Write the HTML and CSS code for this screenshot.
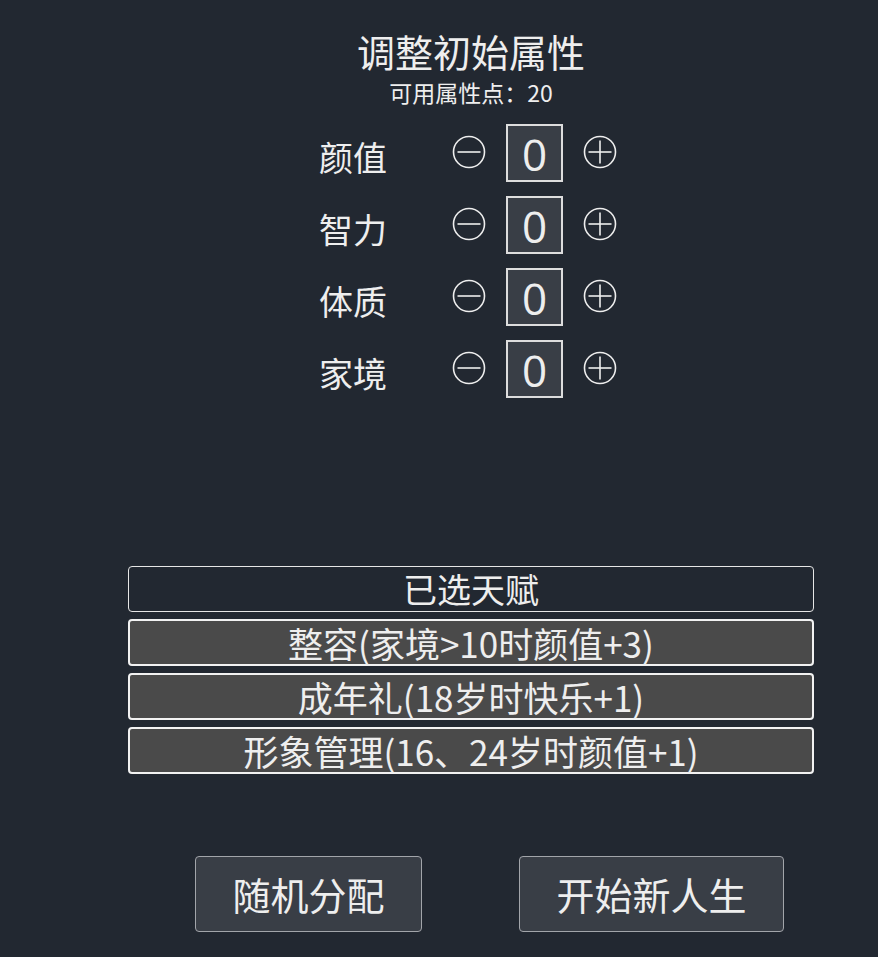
FILE: index.html
```html
<!DOCTYPE html>
<html lang="zh-CN">
<head>
<meta charset="utf-8">
<title>调整初始属性</title>
<link rel="stylesheet" href="styles.css">
</head>
<body>
<main class="page">
  <h1 class="title">调整初始属性</h1>
  <div class="points">可用属性点：20</div>

  <section class="attrs">
    <div class="attr-row">
      <span class="attr-label">颜值</span>
      <button class="circle-btn" aria-label="减少"><svg viewBox="0 0 34 34" width="34" height="34"><circle cx="17" cy="17" r="15.5"/><line x1="5.5" y1="17" x2="28.5" y2="17"/></svg></button>
      <span class="attr-value">0</span>
      <button class="circle-btn" aria-label="增加"><svg viewBox="0 0 34 34" width="34" height="34"><circle cx="17" cy="17" r="15.5"/><line x1="5.5" y1="17" x2="28.5" y2="17"/><line x1="17" y1="5.5" x2="17" y2="28.5"/></svg></button>
    </div>
    <div class="attr-row">
      <span class="attr-label">智力</span>
      <button class="circle-btn" aria-label="减少"><svg viewBox="0 0 34 34" width="34" height="34"><circle cx="17" cy="17" r="15.5"/><line x1="5.5" y1="17" x2="28.5" y2="17"/></svg></button>
      <span class="attr-value">0</span>
      <button class="circle-btn" aria-label="增加"><svg viewBox="0 0 34 34" width="34" height="34"><circle cx="17" cy="17" r="15.5"/><line x1="5.5" y1="17" x2="28.5" y2="17"/><line x1="17" y1="5.5" x2="17" y2="28.5"/></svg></button>
    </div>
    <div class="attr-row">
      <span class="attr-label">体质</span>
      <button class="circle-btn" aria-label="减少"><svg viewBox="0 0 34 34" width="34" height="34"><circle cx="17" cy="17" r="15.5"/><line x1="5.5" y1="17" x2="28.5" y2="17"/></svg></button>
      <span class="attr-value">0</span>
      <button class="circle-btn" aria-label="增加"><svg viewBox="0 0 34 34" width="34" height="34"><circle cx="17" cy="17" r="15.5"/><line x1="5.5" y1="17" x2="28.5" y2="17"/><line x1="17" y1="5.5" x2="17" y2="28.5"/></svg></button>
    </div>
    <div class="attr-row">
      <span class="attr-label">家境</span>
      <button class="circle-btn" aria-label="减少"><svg viewBox="0 0 34 34" width="34" height="34"><circle cx="17" cy="17" r="15.5"/><line x1="5.5" y1="17" x2="28.5" y2="17"/></svg></button>
      <span class="attr-value">0</span>
      <button class="circle-btn" aria-label="增加"><svg viewBox="0 0 34 34" width="34" height="34"><circle cx="17" cy="17" r="15.5"/><line x1="5.5" y1="17" x2="28.5" y2="17"/><line x1="17" y1="5.5" x2="17" y2="28.5"/></svg></button>
    </div>
  </section>

  <section class="talents">
    <div class="talent-head">已选天赋</div>
    <div class="talent">整容(家境&gt;10时颜值+3)</div>
    <div class="talent">成年礼(18岁时快乐+1)</div>
    <div class="talent">形象管理(16、24岁时颜值+1)</div>
  </section>

  <div class="actions">
    <button class="action-btn btn-random">随机分配</button>
    <button class="action-btn btn-start">开始新人生</button>
  </div>
</main>
</body>
</html>
```

FILE: styles.css
```css
html, body {
  margin: 0;
  padding: 0;
  background: #222831;
  height: 100%;
}

body {
  font-family: "Noto Sans CJK SC", "Noto Sans", sans-serif;
  color: #eeeeee;
}

.page {
  width: 686px;
  margin-left: 128px;
  padding-top: 29px;
  display: flex;
  flex-direction: column;
  align-items: center;
}

.title {
  margin: 0;
  font-size: 38px;
  line-height: 44px;
  font-weight: normal;
  color: #eeeeee;
}

.points {
  margin-top: 6px;
  font-size: 23px;
  line-height: 26px;
}

.attrs {
  margin-top: 19px;
  display: flex;
  flex-direction: column;
  gap: 14px;
}

.attr-row {
  display: flex;
  align-items: center;
  height: 58px;
  margin-left: -6px;
}

.attr-label {
  width: 68px;
  font-size: 34px;
  line-height: 40px;
  margin-top: 8px;
  margin-right: 65px;
  white-space: nowrap;
}

.circle-btn {
  width: 34px;
  height: 34px;
  padding: 0;
  border: none;
  background: transparent;
  display: flex;
  margin-top: -2px;
}

.circle-btn svg {
  fill: none;
  stroke: #eeeeee;
  stroke-width: 1.6;
}

.attr-value {
  box-sizing: border-box;
  width: 57px;
  height: 58px;
  margin: 0 20px;
  border: 2px solid #dddddd;
  background: #393e46;
  font-family: "Open Sans", "Noto Sans", sans-serif;
  font-size: 44px;
  line-height: 56px;
  text-align: center;
  color: #eeeeee;
}

.talents {
  align-self: stretch;
  margin-top: 168px;
  display: flex;
  flex-direction: column;
  gap: 7px;
}

.talent-head {
  box-sizing: border-box;
  height: 46px;
  border: 1px solid #e6e6e6;
  border-radius: 4px;
  font-size: 34px;
  line-height: 44px;
  text-align: center;
}

.talent {
  box-sizing: border-box;
  height: 47px;
  border: 2px solid #f2f2f2;
  border-radius: 4px;
  background: #4a4a4a;
  font-size: 35px;
  line-height: 43px;
  text-align: center;
  white-space: nowrap;
}

.actions {
  margin-top: 82px;
  margin-left: 37px;
  display: flex;
  gap: 97px;
}

.action-btn {
  box-sizing: border-box;
  height: 76px;
  border: 1px solid #a2a5aa;
  border-radius: 4px;
  background: #393e46;
  color: #eeeeee;
  font-family: "Noto Sans CJK SC", "Noto Sans", sans-serif;
  font-size: 38px;
  line-height: 74px;
  padding: 0;
  text-align: center;
}

.btn-random {
  width: 227px;
}

.btn-start {
  width: 265px;
}
```
